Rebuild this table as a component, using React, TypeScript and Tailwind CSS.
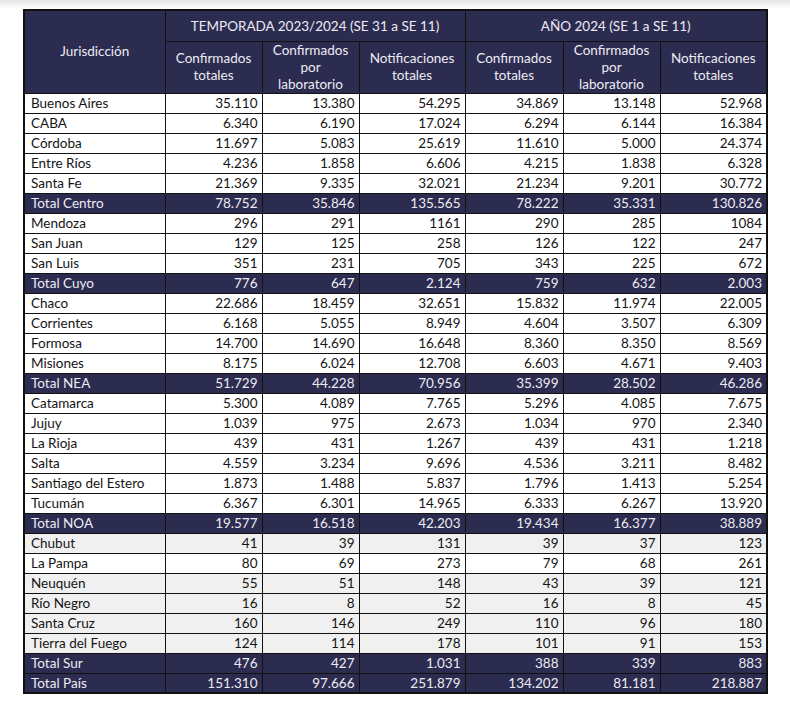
type Row = { name: string; v: string[]; total?: boolean; gray?: boolean }

const rows: Row[] = [
  { name: "Buenos Aires", v: ["35.110", "13.380", "54.295", "34.869", "13.148", "52.968"] },
  { name: "CABA", v: ["6.340", "6.190", "17.024", "6.294", "6.144", "16.384"] },
  { name: "Córdoba", v: ["11.697", "5.083", "25.619", "11.610", "5.000", "24.374"] },
  { name: "Entre Ríos", v: ["4.236", "1.858", "6.606", "4.215", "1.838", "6.328"] },
  { name: "Santa Fe", v: ["21.369", "9.335", "32.021", "21.234", "9.201", "30.772"] },
  { name: "Total Centro", v: ["78.752", "35.846", "135.565", "78.222", "35.331", "130.826"], total: true },
  { name: "Mendoza", v: ["296", "291", "1161", "290", "285", "1084"] },
  { name: "San Juan", v: ["129", "125", "258", "126", "122", "247"] },
  { name: "San Luis", v: ["351", "231", "705", "343", "225", "672"] },
  { name: "Total Cuyo", v: ["776", "647", "2.124", "759", "632", "2.003"], total: true },
  { name: "Chaco", v: ["22.686", "18.459", "32.651", "15.832", "11.974", "22.005"] },
  { name: "Corrientes", v: ["6.168", "5.055", "8.949", "4.604", "3.507", "6.309"] },
  { name: "Formosa", v: ["14.700", "14.690", "16.648", "8.360", "8.350", "8.569"] },
  { name: "Misiones", v: ["8.175", "6.024", "12.708", "6.603", "4.671", "9.403"] },
  { name: "Total NEA", v: ["51.729", "44.228", "70.956", "35.399", "28.502", "46.286"], total: true },
  { name: "Catamarca", v: ["5.300", "4.089", "7.765", "5.296", "4.085", "7.675"] },
  { name: "Jujuy", v: ["1.039", "975", "2.673", "1.034", "970", "2.340"] },
  { name: "La Rioja", v: ["439", "431", "1.267", "439", "431", "1.218"] },
  { name: "Salta", v: ["4.559", "3.234", "9.696", "4.536", "3.211", "8.482"] },
  { name: "Santiago del Estero", v: ["1.873", "1.488", "5.837", "1.796", "1.413", "5.254"] },
  { name: "Tucumán", v: ["6.367", "6.301", "14.965", "6.333", "6.267", "13.920"] },
  { name: "Total NOA", v: ["19.577", "16.518", "42.203", "19.434", "16.377", "38.889"], total: true },
  { name: "Chubut", v: ["41", "39", "131", "39", "37", "123"], gray: true },
  { name: "La Pampa", v: ["80", "69", "273", "79", "68", "261"] },
  { name: "Neuquén", v: ["55", "51", "148", "43", "39", "121"], gray: true },
  { name: "Río Negro", v: ["16", "8", "52", "16", "8", "45"], gray: true },
  { name: "Santa Cruz", v: ["160", "146", "249", "110", "96", "180"], gray: true },
  { name: "Tierra del Fuego", v: ["124", "114", "178", "101", "91", "153"], gray: true },
  { name: "Total Sur", v: ["476", "427", "1.031", "388", "339", "883"], total: true },
  { name: "Total País", v: ["151.310", "97.666", "251.879", "134.202", "81.181", "218.887"], total: true },
]

const subHeads = [
  ["Confirmados", "totales"],
  ["Confirmados", "por", "laboratorio"],
  ["Notificaciones", "totales"],
  ["Confirmados", "totales"],
  ["Confirmados", "por", "laboratorio"],
  ["Notificaciones", "totales"],
]

const widths = [141, 97, 97, 106, 98, 97, 107]

export default function App() {
  return (
    <div className="h-[704px] w-[790px] bg-white text-[13.5px] text-[#141414] [font-family:Lato,'Open_Sans',sans-serif]">
      <div className="h-[9px] bg-gradient-to-b from-[#e6e6e6] to-white" />
      <div className="pl-[23px]">
        <table className="w-[743px] table-fixed border-collapse border-2 border-[#111]">
          <colgroup>
            {widths.map((w, i) => (
              <col key={i} style={{ width: w }} />
            ))}
          </colgroup>
          <thead className="bg-[#2c2b50] text-[#ecebf3]">
            <tr className="h-[31px]">
              <th rowSpan={2} className="border border-[#111] pb-[2px] font-normal">
                Jurisdicción
              </th>
              <th colSpan={3} className="border border-[#111] font-normal">
                TEMPORADA 2023/2024 (SE 31 a SE 11)
              </th>
              <th colSpan={3} className="border border-[#111] font-normal">
                AÑO 2024 (SE 1 a SE 11)
              </th>
            </tr>
            <tr className="h-[52px]">
              {subHeads.map((lines, i) => (
                <th key={i} className="border border-[#111] font-normal leading-[17px]">
                  {lines.map((l) => (
                    <div key={l}>{l}</div>
                  ))}
                </th>
              ))}
            </tr>
          </thead>
          <tbody>
            {rows.map((r) => (
              <tr
                key={r.name}
                className={
                  r.total
                    ? "h-[20px] bg-[#2c2b50] text-[#ecebf3]"
                    : r.gray
                      ? "h-[20px] bg-[#f0f0f0]"
                      : "h-[20px] bg-white"
                }
              >
                <td className="border border-[#111] px-[6px] leading-[18px] whitespace-nowrap">{r.name}</td>
                {r.v.map((n, i) => (
                  <td key={i} className="border border-[#111] px-[4px] text-right leading-[18px]">
                    {n}
                  </td>
                ))}
              </tr>
            ))}
          </tbody>
        </table>
      </div>
    </div>
  )
}
